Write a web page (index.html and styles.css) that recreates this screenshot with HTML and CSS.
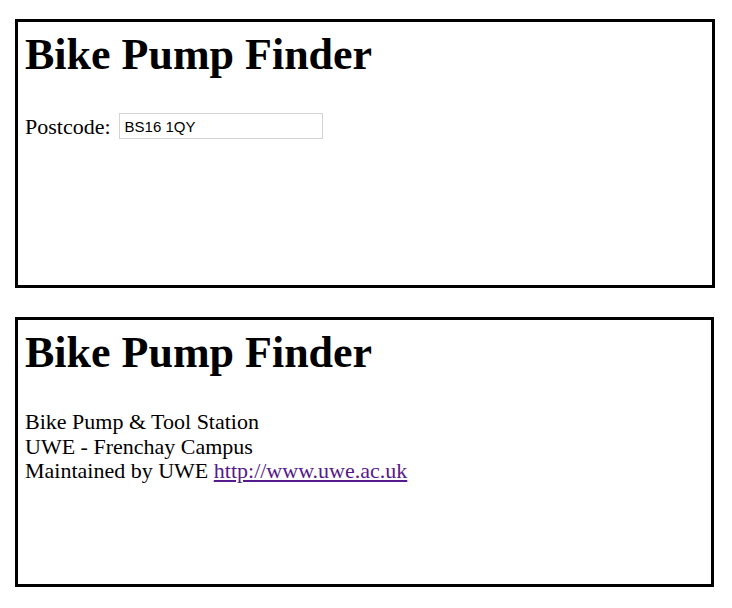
FILE: index.html
```html
<!DOCTYPE html>
<html>
<head>
<meta charset="utf-8">
<link rel="stylesheet" href="styles.css">
</head>
<body>
<div class="page">
  <section class="panel">
    <h1 class="title">Bike Pump Finder</h1>
    <form class="search">
      <label class="label" for="pc">Postcode:</label>
      <input class="field" id="pc" type="text" value="BS16 1QY">
    </form>
  </section>
  <section class="panel panel-result">
    <h1 class="title">Bike Pump Finder</h1>
    <div class="info">
      Bike Pump &amp; Tool Station<br>
      UWE - Frenchay Campus<br>
      Maintained by UWE <a class="link" href="#">http://www.uwe.ac.uk</a>
    </div>
  </section>
</div>
</body>
</html>
```
FILE: styles.css
```css
html, body {
  margin: 0;
  padding: 0;
  background: #fff;
}
.page {
  padding: 19px 0 0 15px;
  display: flex;
  flex-direction: column;
  gap: 29px;
  font-family: "Liberation Serif", "Times New Roman", serif;
  font-size: 22px;
  color: #000;
}
.panel {
  box-sizing: border-box;
  width: 700px;
  height: 269px;
  border: 3px solid #000;
  padding: 0 7px;
}
.panel-result {
  width: 699px;
  height: 270px;
}
.title {
  font-size: 44px;
  font-weight: bold;
  margin: 8px 0 0;
  line-height: 50px;
}
.search {
  margin-top: 33px;
  display: flex;
  align-items: center;
  gap: 8px;
}
.label {
  line-height: 25px;
}
.field {
  box-sizing: border-box;
  width: 204px;
  height: 26px;
  border: 1px solid #d4d4d4;
  padding: 2px 5px;
  font-family: "Liberation Sans", Arial, sans-serif;
  font-size: 15px;
  color: #000;
  outline: none;
}
.info {
  margin-top: 32px;
  line-height: 24.5px;
}
.link {
  color: #551a8b;
}
```
